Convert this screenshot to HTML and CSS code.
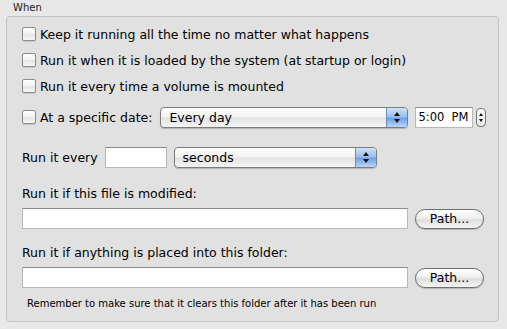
FILE: index.html
```html
<!DOCTYPE html>
<html>
<head lang="en">
    <meta charset="UTF-8">
    <title>When</title>
    <link rel="stylesheet" href="styles.css">
</head>
<body>
<div class="legend">When</div>
<div class="box">
    <label class="row check-row"><span class="check"></span>Keep it running all the time no matter what happens</label>
    <label class="row check-row"><span class="check"></span>Run it when it is loaded by the system (at startup or login)</label>
    <label class="row check-row"><span class="check"></span>Run it every time a volume is mounted</label>
    <div class="row date-row">
        <label class="check-row"><span class="check"></span>At a specific date:</label>
        <div class="popup popup-day"><span class="popup-text">Every day</span><span class="popup-arrows"><i class="up"></i><i class="down"></i></span></div>
        <div class="time">5:00&nbsp; PM</div>
        <div class="stepper"><i class="up"></i><i class="down"></i></div>
    </div>
    <div class="row every-row">
        <span>Run it every</span>
        <div class="field field-small"></div>
        <div class="popup popup-unit"><span class="popup-text">seconds</span><span class="popup-arrows"><i class="up"></i><i class="down"></i></span></div>
    </div>
    <div class="label first-label">Run it if this file is modified:</div>
    <div class="row path-row">
        <div class="field field-path"></div>
        <div class="button">Path...</div>
    </div>
    <div class="label">Run it if anything is placed into this folder:</div>
    <div class="row path-row">
        <div class="field field-path"></div>
        <div class="button">Path...</div>
    </div>
    <div class="note">Remember to make sure that it clears this folder after it has been run</div>
</div>
</body>
</html>
```

FILE: styles.css
```css
* {
    margin: 0;
    padding: 0;
    box-sizing: border-box;
}

body {
    width: 507px;
    height: 329px;
    background: #e8e8e8;
    font-family: "DejaVu Sans", sans-serif;
    font-size: 12.5px;
    color: #000;
    overflow: hidden;
}

.legend {
    height: 16px;
    padding-left: 13px;
    font-size: 10px;
    line-height: 16px;
    color: #1a1a1a;
}

.box {
    margin: 0 8px 0 6px;
    height: 306px;
    border: 1px solid #c4c4c4;
    border-radius: 4px;
    background: #e1e1e1;
    padding: 4px 0 0 15px;
}

.row {
    display: flex;
    align-items: center;
}

.check-row {
    display: flex;
    align-items: center;
    height: 26px;
}

.check {
    width: 14px;
    height: 14px;
    margin-right: 4px;
    border: 1px solid #8c8c8c;
    border-radius: 2px;
    background: linear-gradient(#ffffff, #f1f1f1 50%, #e4e4e4 51%, #f6f6f6);
    box-shadow: 0 1px 1px rgba(0, 0, 0, 0.12);
}

.date-row {
    height: 26px;
    margin-top: 5px;
}

.popup {
    display: flex;
    height: 21px;
    border: 1px solid #7c7c7c;
    border-radius: 4px;
    background: linear-gradient(#ffffff, #f2f2f2 45%, #e3e3e3 55%, #f5f5f5);
    box-shadow: 0 1px 1px rgba(0, 0, 0, 0.2);
    overflow: hidden;
}

.popup-text {
    flex: 1;
    padding-left: 8px;
    line-height: 19px;
}

.popup-arrows {
    width: 21px;
    display: flex;
    flex-direction: column;
    align-items: center;
    justify-content: center;
    gap: 3px;
    border-left: 1px solid #6d8fc0;
    background: linear-gradient(#cfe1f8, #9cc0ee 45%, #6fa3e8 55%, #b9d6fb);
}

.up, .down {
    display: block;
    width: 0;
    height: 0;
    border-left: 3px solid transparent;
    border-right: 3px solid transparent;
}

.up {
    border-bottom: 4px solid #111;
}

.down {
    border-top: 4px solid #111;
}

.popup-day {
    width: 248px;
    margin-left: 8px;
}

.time {
    width: 58px;
    height: 21px;
    margin-left: 7px;
    background: #fff;
    border: 1px solid #b8b8b8;
    border-top-color: #8e8e8e;
    text-align: right;
    padding-right: 4px;
    font-size: 11.5px;
    line-height: 19px;
}

.stepper {
    width: 10px;
    height: 19px;
    margin-left: 3px;
    border: 1px solid #777;
    border-radius: 4px;
    background: linear-gradient(#fff, #e6e6e6);
    display: flex;
    flex-direction: column;
    align-items: center;
    justify-content: center;
    gap: 3px;
}

.stepper .up, .stepper .down {
    border-left-width: 2px;
    border-right-width: 2px;
}

.stepper .up {
    border-bottom-width: 3px;
}

.stepper .down {
    border-top-width: 3px;
}

.every-row {
    height: 26px;
    margin-top: 14px;
}

.field {
    height: 21px;
    background: #fff;
    border: 1px solid #b8b8b8;
    border-top-color: #8a8a8a;
}

.field-small {
    width: 62px;
    margin-left: 7px;
}

.popup-unit {
    width: 203px;
    margin-left: 7px;
}

.label {
    height: 20px;
    line-height: 20px;
    margin-top: 13px;
}

.first-label {
    margin-top: 14px;
}

.path-row {
    height: 23px;
    margin-top: 3px;
}

.field-path {
    width: 386px;
}

.button {
    width: 69px;
    height: 20px;
    margin-left: 7px;
    border: 1px solid #6f6f6f;
    border-radius: 10px;
    background: linear-gradient(#ffffff, #f0f0f0 45%, #dedede 55%, #f7f7f7);
    box-shadow: 0 1px 1px rgba(0, 0, 0, 0.2);
    text-align: center;
    line-height: 18px;
}

.note {
    margin-top: 7px;
    padding-left: 5px;
    font-size: 10px;
    line-height: 16px;
}
```
